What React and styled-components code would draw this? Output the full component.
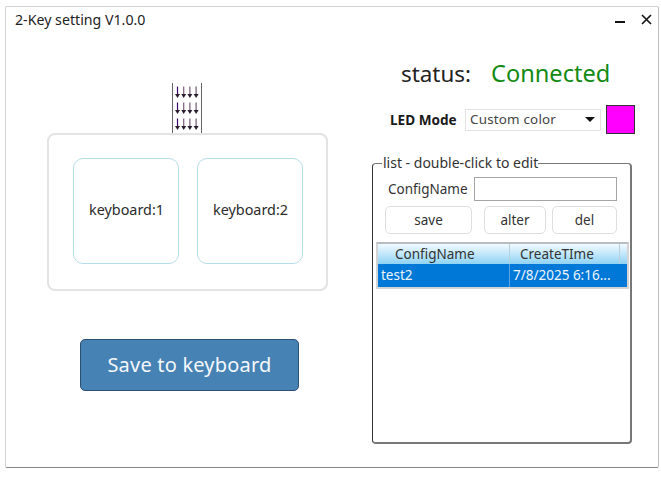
import styled, { createGlobalStyle } from "styled-components";

const GlobalStyle = createGlobalStyle`
    html, body {
        margin: 0;
        padding: 0;
        background: #fff;
    }
    body {
        font-family: "Noto Sans", "Open Sans", sans-serif;
        color: #222;
    }
`;

const StyledWindow = styled.div`
    box-sizing: border-box;
    width: 654px;
    height: 462px;
    margin: 6px 0 0 5px;
    background: #fff;
    border: 1px solid #d2d2d2;
    border-bottom-color: #858585;
    border-right-color: #bdbdbd;
    border-radius: 2px;
    display: flex;
    flex-direction: column;
`;

const StyledTitleBar = styled.div`
    height: 28px;
    flex: none;
    display: flex;
    justify-content: space-between;
    align-items: flex-start;
    padding: 4px 6px 0 9px;
    font-size: 14.2px;
    line-height: 17px;
`;

const StyledWinBtns = styled.div`
    display: flex;
    align-items: center;
    gap: 16px;
    height: 16px;
    svg { display: block; }
`;

const StyledBody = styled.div`
    flex: 1;
    display: grid;
    grid-template-columns: 366px 1fr;
    min-height: 0;
`;

const StyledLeft = styled.div`
    display: flex;
    flex-direction: column;
    padding: 44px 0 0 41px;
`;

const StyledArrows = styled.div`
    box-sizing: border-box;
    width: 30px;
    height: 50px;
    margin-left: 125px;
    border-left: 1px solid #666;
    border-right: 1px solid #666;
    display: flex;
    flex-direction: column;
    align-items: center;
    justify-content: space-between;
    padding: 3px 0 2px;
`;

const StyledPanel = styled.div`
    box-sizing: border-box;
    width: 281px;
    height: 158px;
    border: 2px solid #e3e3e3;
    border-radius: 8px;
    display: flex;
    gap: 18px;
    padding: 23px 0 0 24px;
`;

const StyledKeyCard = styled.div`
    box-sizing: border-box;
    width: 106px;
    height: 106px;
    padding: 0 0 3px 1px;
    border: 1px solid #b5dde8;
    border-radius: 10px;
    display: flex;
    align-items: center;
    justify-content: center;
    font-size: 14.4px;
    color: #2b2b2b;
`;

const StyledSaveBtn = styled.button`
    box-sizing: border-box;
    width: 219px;
    height: 52px;
    margin: 48px 0 0 33px;
    background: #4682b4;
    border: 1px solid #2f4f70;
    border-radius: 5px;
    color: #f5f8fb;
    font-family: inherit;
    font-size: 20px;
    letter-spacing: 0.2px;
    padding-bottom: 2px;
`;

const StyledRight = styled.div`
    display: flex;
    flex-direction: column;
    align-items: flex-start;
`;

const StyledStatus = styled.div`
    display: flex;
    align-items: baseline;
    gap: 20px;
    margin: 19px 0 0 29px;
    height: 31px;
    line-height: 31px;
    font-size: 22.4px;
`;

const StyledConnected = styled.span`
    color: #138a13;
    font-size: 23.6px;
`;

const StyledLedRow = styled.div`
    display: flex;
    align-items: center;
    margin: 16px 0 0 18px;
`;

const StyledLedLabel = styled.label`
    font-size: 13.6px;
    font-weight: 700;
    color: #1a1a1a;
    width: 75px;
    white-space: nowrap;
`;

const StyledSelect = styled.div`
    box-sizing: border-box;
    width: 136px;
    height: 22px;
    border: 1px solid #e2e2e2;
    display: flex;
    align-items: center;
    justify-content: space-between;
    padding: 0 5px 2px 4px;
    font-size: 13.4px;
    color: #444;
    letter-spacing: 0.2px;
`;

const StyledCaret = styled.span`
    width: 0;
    height: 0;
    margin-top: 2px;
    border-left: 5px solid transparent;
    border-right: 5px solid transparent;
    border-top: 5px solid #111;
`;

const StyledSwatch = styled.div`
    box-sizing: border-box;
    width: 29px;
    height: 29px;
    margin-left: 5px;
    background: ${(p) => p.$color};
    border: 1px solid #333;
`;

const StyledFieldset = styled.fieldset`
    box-sizing: border-box;
    width: 260px;
    height: 288px;
    margin: 22px 0 0 0;
    padding: 0 1px 3px 3px;
    border: 1px solid #777;
    border-right: 2px solid #777;
    border-bottom: 2px solid #777;
    border-left-color: #333;
    border-radius: 4px;
    min-width: 0;
    display: flex;
    flex-direction: column;
`;

const StyledLegend = styled.legend`
    margin-left: 6px;
    padding: 0 0 0 1px;
    font-size: 14px;
    line-height: 14px;
    color: #333;
`;

const StyledNameRow = styled.div`
    display: flex;
    align-items: center;
    margin-top: 7px;
`;

const StyledNameLabel = styled.label`
    width: 98px;
    padding-left: 12px;
    box-sizing: border-box;
    font-size: 13.5px;
    color: #333;
    padding-bottom: 1px;
`;

const StyledInput = styled.div`
    box-sizing: border-box;
    width: 143px;
    height: 24px;
    border: 1px solid #a5a5a5;
`;

const StyledBtnRow = styled.div`
    display: flex;
    margin: 5px 0 0 9px;
`;

const StyledBtn = styled.button`
    box-sizing: border-box;
    width: ${(p) => p.$width}px;
    height: 28px;
    margin-right: ${(p) => p.$gap}px;
    background: #fff;
    border: 1px solid #dedede;
    border-radius: 5px;
    font-family: inherit;
    font-size: 13.5px;
    color: #333;
    padding: 0;
`;

const StyledTable = styled.div`
    flex: 1;
    margin-top: 8px;
    border: 2px solid #d4d4d4;
    border-top-color: #b8bcc4;
    box-sizing: border-box;
    display: flex;
    flex-direction: column;
`;

const StyledHeader = styled.div`
    display: grid;
    grid-template-columns: 132px 110px 1fr;
    height: 20px;
    background: linear-gradient(#f2fafe, #8fd3f5);
    font-size: 13.5px;
    color: #333;
    line-height: 20px;
`;

const StyledHeadCell = styled.div`
    border-right: 1px solid #b8cfdc;
    padding-left: ${(p) => p.$pad}px;
    white-space: nowrap;
    &:last-child { border-right: none; }
`;

const StyledRow = styled.div`
    display: grid;
    grid-template-columns: 132px 1fr;
    height: 23px;
    background: #0078d7;
    color: #eef6fd;
    font-size: 13.5px;
    line-height: 23px;
`;

const StyledCell = styled.div`
    padding-left: ${(p) => p.$pad}px;
    border-right: 1px solid #5aa5e2;
    white-space: nowrap;
    &:last-child { border-right: none; }
`;

function ArrowLine() {
    const shades = ["#3a0a6a", "#7a5a78", "#7a5a70", "#6a5a68"];
    return (
        <svg width="26" height="13" viewBox="0 0 26 13">
            {shades.map((shade, i) => (
                <g key={i}>
                    <path d={`M${3.5 + i * 6.2} 0.5v9`} stroke={shade} fill="none" strokeWidth="1.2" />
                    <path d={`M${1 + i * 6.2} 8h5l-2.5 4z`} fill="#2a2030" />
                </g>
            ))}
        </svg>
    );
}

export default function App() {
    return (
        <>
            <GlobalStyle />
            <StyledWindow>
                <StyledTitleBar>
                    <span>2-Key setting V1.0.0</span>
                    <StyledWinBtns>
                        <svg width="10" height="10" viewBox="0 0 10 10">
                            <path d="M0 8h10" stroke="#111" strokeWidth="2" />
                        </svg>
                        <svg width="11" height="11" viewBox="0 0 11 11">
                            <path d="M1 1l9 9M10 1l-9 9" stroke="#111" strokeWidth="1.6" />
                        </svg>
                    </StyledWinBtns>
                </StyledTitleBar>
                <StyledBody>
                    <StyledLeft>
                        <StyledArrows>
                            <ArrowLine />
                            <ArrowLine />
                            <ArrowLine />
                        </StyledArrows>
                        <StyledPanel>
                            <StyledKeyCard>keyboard:1</StyledKeyCard>
                            <StyledKeyCard>keyboard:2</StyledKeyCard>
                        </StyledPanel>
                        <StyledSaveBtn>Save to keyboard</StyledSaveBtn>
                    </StyledLeft>
                    <StyledRight>
                        <StyledStatus>
                            <span>status:</span>
                            <StyledConnected>Connected</StyledConnected>
                        </StyledStatus>
                        <StyledLedRow>
                            <StyledLedLabel>LED Mode</StyledLedLabel>
                            <StyledSelect>
                                Custom color
                                <StyledCaret />
                            </StyledSelect>
                            <StyledSwatch $color="#ff00ff" />
                        </StyledLedRow>
                        <StyledFieldset>
                            <StyledLegend>list - double-click to edit</StyledLegend>
                            <StyledNameRow>
                                <StyledNameLabel>ConfigName</StyledNameLabel>
                                <StyledInput />
                            </StyledNameRow>
                            <StyledBtnRow>
                                <StyledBtn $width={87} $gap={12}>save</StyledBtn>
                                <StyledBtn $width={62} $gap={6}>alter</StyledBtn>
                                <StyledBtn $width={65} $gap={0}>del</StyledBtn>
                            </StyledBtnRow>
                            <StyledTable>
                                <StyledHeader>
                                    <StyledHeadCell $pad={17}>ConfigName</StyledHeadCell>
                                    <StyledHeadCell $pad={10}>CreateTIme</StyledHeadCell>
                                    <StyledHeadCell $pad={0} />
                                </StyledHeader>
                                <StyledRow>
                                    <StyledCell $pad={3}>test2</StyledCell>
                                    <StyledCell $pad={3}>7/8/2025 6:16...</StyledCell>
                                </StyledRow>
                            </StyledTable>
                        </StyledFieldset>
                    </StyledRight>
                </StyledBody>
            </StyledWindow>
        </>
    );
}
